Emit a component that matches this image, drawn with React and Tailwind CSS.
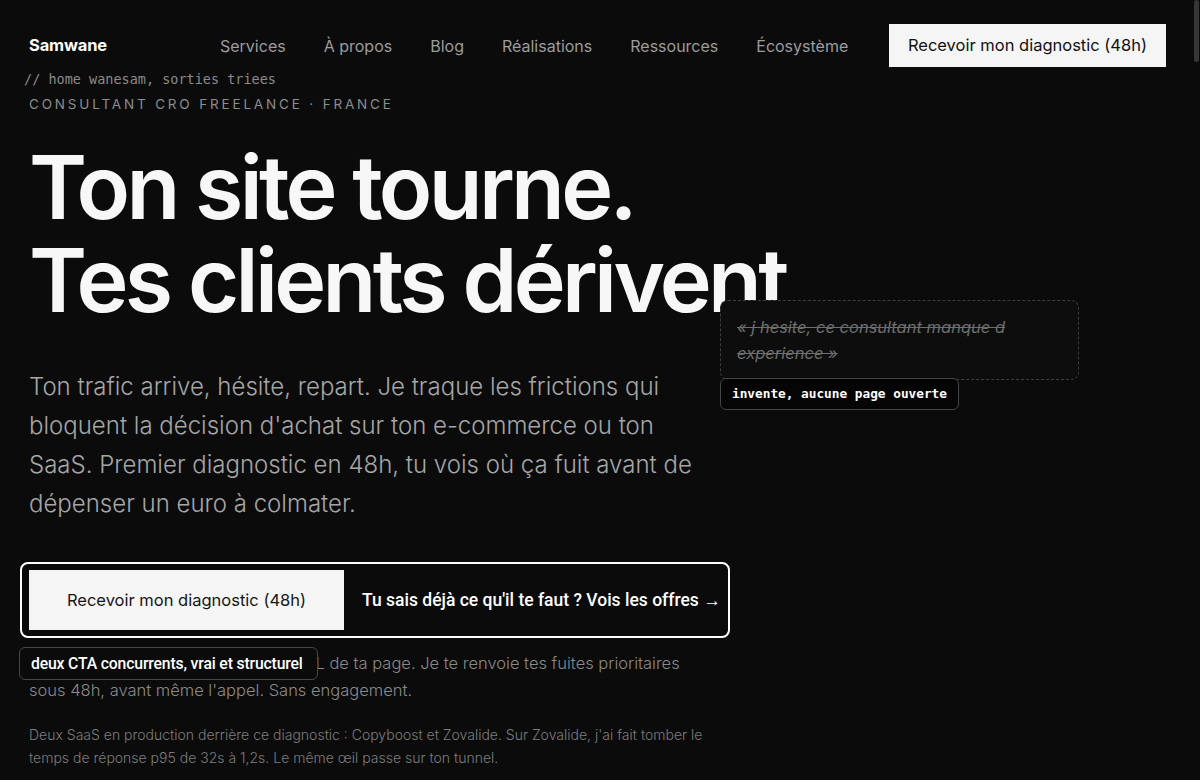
const links = ["Services", "À propos", "Blog", "Réalisations", "Ressources", "Écosystème"];

const sans = { fontFamily: "Inter, 'Noto Sans', sans-serif" };
const roboto = { fontFamily: "Roboto, 'Noto Sans', sans-serif" };
const mono = { fontFamily: "'DejaVu Sans Mono', monospace" };

export default function App() {
    return (
        <div
            className="relative h-[780px] w-[1200px] overflow-hidden bg-[#0b0b0b] text-[#f5f5f5]"
            style={sans}
        >
            {/* scrollbar thumb */}
            <div className="absolute right-[1px] top-0 h-[62px] w-[5px] rounded-full bg-[#363636]" />

            {/* NAV */}
            <header className="flex items-center pl-[29px] pr-[34px] pt-[24px]">
                <div className="w-[191px] text-[16.5px] font-bold tracking-[-0.01em] text-white">Samwane</div>
                <nav className="flex gap-[38px] text-[16px] text-[#9c9c9c]">
                    {links.map((l) => (
                        <a key={l} className="cursor-pointer hover:text-white">{l}</a>
                    ))}
                </nav>
                <button className="ml-auto flex h-[43px] items-center bg-[#f5f5f5] px-[19px] text-[16.5px] text-[#111]">
                    Recevoir mon diagnostic (48h)
                </button>
            </header>

            {/* HERO */}
            <section className="relative pl-[29px]">
                <p className="-ml-[5px] mt-[3px] text-[13.5px] leading-[18px] text-[#8a8a8a]" style={mono}>
                    // home wanesam, sorties triees
                </p>
                <p className="mt-[6px] text-[13.5px] leading-[20px] uppercase tracking-[0.21em] text-[#8c8c8c]">
                    Consultant CRO freelance · France
                </p>

                <h1 className="mt-[27px] text-[88px] font-semibold leading-[93px] tracking-[-0.042em] text-[#f7f7f7]">
                    Ton site tourne.
                    <br />
                    Tes clients dérivent
                </h1>

                <p className="mt-[40px] max-w-[665px] text-[24px] font-light leading-[39px] text-[#a6a6a6]">
                    Ton trafic arrive, hésite, repart. Je traque les frictions qui bloquent la décision d'achat sur ton e-commerce ou ton SaaS. Premier diagnostic en 48h, tu vois où ça fuit avant de dépenser un euro à colmater.
                </p>

                {/* CTA */}
                <div className="-ml-[9px] mt-[39px] flex w-fit items-center gap-[18px] rounded-[8px] border-2 border-white px-[7px] py-[6px]">
                    <button className="flex h-[60px] w-[315px] items-center justify-center bg-[#f5f5f5] text-[16.5px] text-[#161616]">
                        Recevoir mon diagnostic (48h)
                    </button>
                    <a className="text-[17.5px] font-medium text-white" style={roboto}>
                        Tu sais déjà ce qu'il te faut ? Vois les offres →
                    </a>
                </div>

                <div className="relative mt-[12px]">
                    <p className="max-w-[665px] text-[16.5px] font-light leading-[27px] text-[#8a8a8a]">
                        <span className="tracking-[-0.006em]">Pour démarrer tu m'envoies juste l'UR</span>L de ta page. Je te renvoie tes fuites prioritaires sous 48h, avant même l'appel. Sans engagement.
                    </p>
                    <span
                        className="absolute left-[-10px] top-[-3px] flex h-[33px] w-[299px] items-center whitespace-nowrap rounded-[6px] border border-[#474747] bg-[#0b0b0b] px-[11px] text-[15.75px] font-medium tracking-[-0.01em] text-white"
                        style={roboto}
                    >
                        deux CTA concurrents, vrai et structurel
                    </span>
                </div>

                <p className="mt-[19px] max-w-[690px] text-[14px] font-light leading-[23px] text-[#7d7d7d]">
                    Deux SaaS en production derrière ce diagnostic : Copyboost et Zovalide. Sur Zovalide, j'ai fait tomber le temps de réponse p95 de 32s à 1,2s. Le même œil passe sur ton tunnel.
                </p>
            </section>

            {/* annotations over the hero */}
            <div className="absolute left-[720px] top-[300px] h-[80px] w-[359px] rounded-[8px] border border-dashed border-[#3d3d3d] bg-[#0d0d0d] px-[16px] pt-[13px]">
                <p className="text-[16.5px] italic leading-[26px] text-[#6e6e6e] line-through">
                    « j hesite, ce consultant manque d
                    <br />
                    experience »
                </p>
            </div>
            <span
                className="absolute left-[720px] top-[378px] flex h-[32px] items-center rounded-[6px] border border-[#444] bg-[#050505] px-[11px] text-[12.75px] font-bold text-white"
                style={mono}
            >
                invente, aucune page ouverte
            </span>
        </div>
    );
}
